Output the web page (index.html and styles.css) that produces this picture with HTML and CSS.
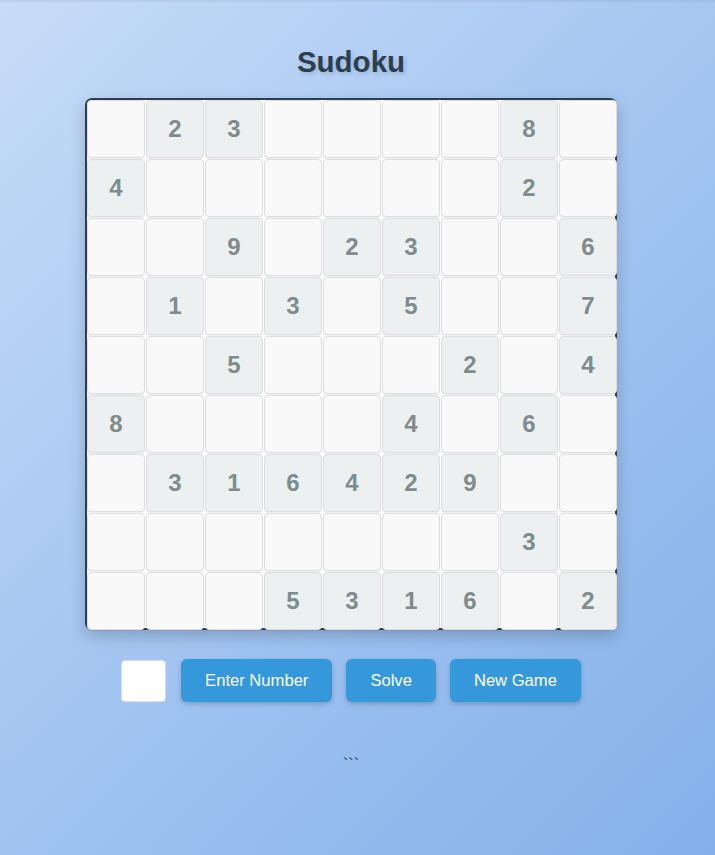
FILE: index.html
```html
<!DOCTYPE html>
<html lang="en">
<head>
<meta charset="utf-8">
<title>Sudoku</title>
<link rel="stylesheet" href="styles.css">
</head>
<body>
<div class="page">
  <h1 class="title">Sudoku</h1>
  <div class="board">
    <div class="cell"></div><div class="cell given">2</div><div class="cell given">3</div><div class="cell"></div><div class="cell"></div><div class="cell"></div><div class="cell"></div><div class="cell given">8</div><div class="cell"></div>
    <div class="cell given">4</div><div class="cell"></div><div class="cell"></div><div class="cell"></div><div class="cell"></div><div class="cell"></div><div class="cell"></div><div class="cell given">2</div><div class="cell"></div>
    <div class="cell"></div><div class="cell"></div><div class="cell given">9</div><div class="cell"></div><div class="cell given">2</div><div class="cell given">3</div><div class="cell"></div><div class="cell"></div><div class="cell given">6</div>
    <div class="cell"></div><div class="cell given">1</div><div class="cell"></div><div class="cell given">3</div><div class="cell"></div><div class="cell given">5</div><div class="cell"></div><div class="cell"></div><div class="cell given">7</div>
    <div class="cell"></div><div class="cell"></div><div class="cell given">5</div><div class="cell"></div><div class="cell"></div><div class="cell"></div><div class="cell given">2</div><div class="cell"></div><div class="cell given">4</div>
    <div class="cell given">8</div><div class="cell"></div><div class="cell"></div><div class="cell"></div><div class="cell"></div><div class="cell given">4</div><div class="cell"></div><div class="cell given">6</div><div class="cell"></div>
    <div class="cell"></div><div class="cell given">3</div><div class="cell given">1</div><div class="cell given">6</div><div class="cell given">4</div><div class="cell given">2</div><div class="cell given">9</div><div class="cell"></div><div class="cell"></div>
    <div class="cell"></div><div class="cell"></div><div class="cell"></div><div class="cell"></div><div class="cell"></div><div class="cell"></div><div class="cell"></div><div class="cell given">3</div><div class="cell"></div>
    <div class="cell"></div><div class="cell"></div><div class="cell"></div><div class="cell given">5</div><div class="cell given">3</div><div class="cell given">1</div><div class="cell given">6</div><div class="cell"></div><div class="cell given">2</div>
  </div>
  <div class="controls">
    <input class="num-input" type="text" aria-label="Number">
    <button class="btn btn-enter">Enter Number</button>
    <button class="btn">Solve</button>
    <button class="btn">New Game</button>
  </div>
  <div class="message">```</div>
</div>
</body>
</html>
```

FILE: styles.css
```css
html, body {
  margin: 0;
  padding: 0;
}
body {
  min-height: 855px;
  background:
    linear-gradient(to bottom, rgba(0, 0, 0, 0.07) 0px, rgba(0, 0, 0, 0) 3px),
    linear-gradient(135deg, #c7dcf8 0%, #a3c5f1 50%, #84b0ea 100%);
  font-family: "Liberation Sans", Arial, sans-serif;
}
.page {
  width: 702px;
  display: flex;
  flex-direction: column;
  align-items: center;
  padding-top: 45px;
}
.title {
  margin: 0 0 19px;
  font-size: 29.5px;
  line-height: 34px;
  font-weight: bold;
  color: #2c3e50;
  text-shadow: 2px 2px 4px rgba(0, 0, 0, 0.15);
}
.board {
  box-sizing: border-box;
  width: 532px;
  height: 532px;
  border: 2px solid #2c3e50;
  border-radius: 7px;
  background: #ffffff;
  box-shadow: 0 6px 16px rgba(0, 0, 0, 0.2);
  display: grid;
  grid-template-columns: repeat(9, 58px);
  grid-template-rows: repeat(9, 58px);
  gap: 1px;
}
.cell {
  box-sizing: border-box;
  border: 1px solid #dddddd;
  border-radius: 4px;
  background: #f9f9f9;
  box-shadow: 0 1px 1px rgba(0, 0, 0, 0.06);
  display: flex;
  align-items: center;
  justify-content: center;
  font-size: 24px;
  font-weight: bold;
  color: #7f8c8d;
}
.cell.given {
  background: #ecf0f1;
}
.controls {
  display: flex;
  align-items: center;
  gap: 14px;
  margin-top: 29px;
}
.num-input {
  box-sizing: border-box;
  width: 45px;
  height: 42px;
  margin: 0 1px 0 0;
  border: 1px solid #dddddd;
  border-radius: 4px;
  background: #ffffff;
  padding: 0;
}
.btn {
  height: 43px;
  padding: 0 24px;
  border: none;
  border-radius: 6px;
  background: #3498db;
  color: #ffffff;
  font-family: "Liberation Sans", Arial, sans-serif;
  font-size: 16.6px;
  box-shadow: 0 2px 5px rgba(0, 0, 0, 0.2);
}
.message {
  margin-top: 53px;
  font-size: 16px;
  line-height: 20px;
  color: #2c3e50;
}
```
